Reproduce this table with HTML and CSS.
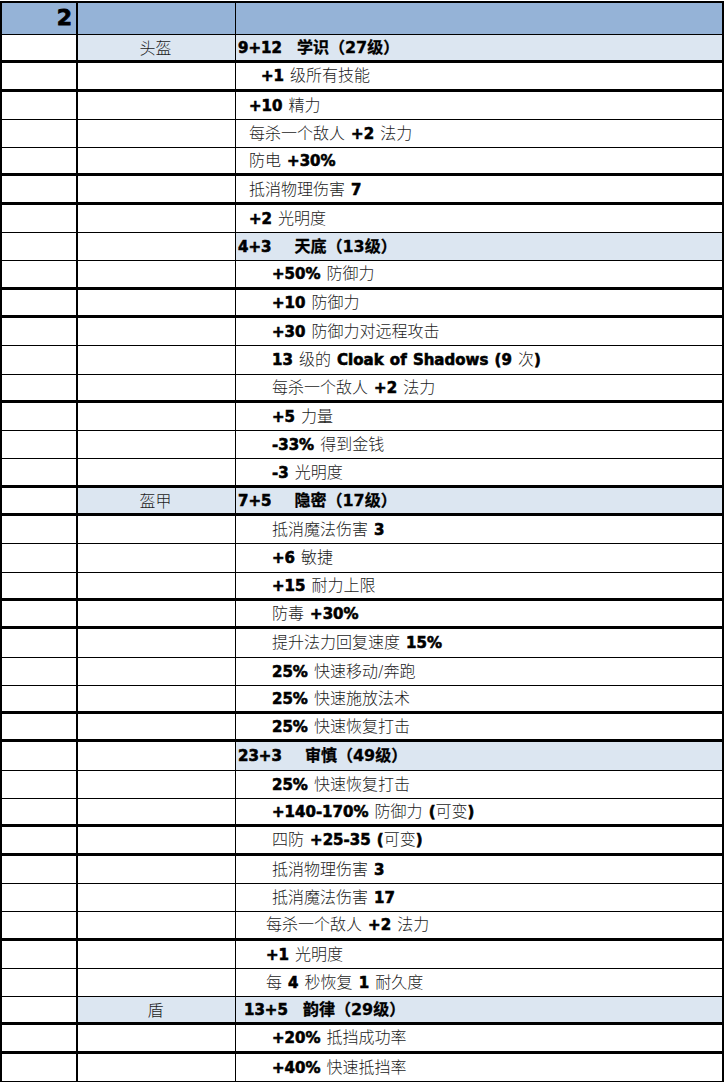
FILE: index.html
```html
<!DOCTYPE html>
<html lang="zh">
<head>
<meta charset="utf-8">
<title>装备属性</title>
<link rel="stylesheet" href="styles.css">
</head>
<body>
<div class="sheet">
  <div class="row head"><div class="c1 num">2</div><div class="c2"></div><div class="c3"></div></div>

  <div class="row sub tk"><div class="c1"></div><div class="c2 lab">头盔</div><div class="c3 pa"><span><b>9+12</b><b class="t gs">学识（27级）</b></span></div></div>
  <div class="row tk"><div class="c1"></div><div class="c2"></div><div class="c3 pc"><span><b>+1</b> 级所有技能</span></div></div>
  <div class="row"><div class="c1"></div><div class="c2"></div><div class="c3 pb"><span><b>+10</b> 精力</span></div></div>
  <div class="row"><div class="c1"></div><div class="c2"></div><div class="c3 pb"><span>每杀一个敌人 <b>+2</b> 法力</span></div></div>
  <div class="row tk"><div class="c1"></div><div class="c2"></div><div class="c3 pb"><span>防电 <b>+30%</b></span></div></div>
  <div class="row tk"><div class="c1"></div><div class="c2"></div><div class="c3 pb"><span>抵消物理伤害 <b>7</b></span></div></div>
  <div class="row"><div class="c1"></div><div class="c2"></div><div class="c3 pb"><span><b>+2</b> 光明度</span></div></div>

  <div class="row sub2"><div class="c1"></div><div class="c2"></div><div class="c3 pa"><span><b>4+3</b><b class="t gl">天底（13级）</b></span></div></div>
  <div class="row tk"><div class="c1"></div><div class="c2"></div><div class="c3 pd"><span><b>+50%</b> 防御力</span></div></div>
  <div class="row tk"><div class="c1"></div><div class="c2"></div><div class="c3 pd"><span><b>+10</b> 防御力</span></div></div>
  <div class="row"><div class="c1"></div><div class="c2"></div><div class="c3 pd"><span><b>+30</b> 防御力对远程攻击</span></div></div>
  <div class="row"><div class="c1"></div><div class="c2"></div><div class="c3 pd"><span><b>13</b> 级的 <b>Cloak of Shadows (9</b> 次<b>)</b></span></div></div>
  <div class="row tk"><div class="c1"></div><div class="c2"></div><div class="c3 pd"><span>每杀一个敌人 <b>+2</b> 法力</span></div></div>
  <div class="row"><div class="c1"></div><div class="c2"></div><div class="c3 pd"><span><b>+5</b> 力量</span></div></div>
  <div class="row"><div class="c1"></div><div class="c2"></div><div class="c3 pd"><span><b>-33%</b> 得到金钱</span></div></div>
  <div class="row tk"><div class="c1"></div><div class="c2"></div><div class="c3 pd"><span><b>-3</b> 光明度</span></div></div>

  <div class="row sub tk"><div class="c1"></div><div class="c2 lab">盔甲</div><div class="c3 pa"><span><b>7+5</b><b class="t gl">隐密（17级）</b></span></div></div>
  <div class="row"><div class="c1"></div><div class="c2"></div><div class="c3 pd"><span>抵消魔法伤害 <b>3</b></span></div></div>
  <div class="row"><div class="c1"></div><div class="c2"></div><div class="c3 pd"><span><b>+6</b> 敏捷</span></div></div>
  <div class="row tk"><div class="c1"></div><div class="c2"></div><div class="c3 pd"><span><b>+15</b> 耐力上限</span></div></div>
  <div class="row tk"><div class="c1"></div><div class="c2"></div><div class="c3 pd"><span>防毒 <b>+30%</b></span></div></div>
  <div class="row"><div class="c1"></div><div class="c2"></div><div class="c3 pd"><span>提升法力回复速度 <b>15%</b></span></div></div>
  <div class="row"><div class="c1"></div><div class="c2"></div><div class="c3 pd"><span><b>25%</b> 快速移动/奔跑</span></div></div>
  <div class="row tk"><div class="c1"></div><div class="c2"></div><div class="c3 pd"><span><b>25%</b> 快速施放法术</span></div></div>
  <div class="row tk"><div class="c1"></div><div class="c2"></div><div class="c3 pd"><span><b>25%</b> 快速恢复打击</span></div></div>

  <div class="row sub2"><div class="c1"></div><div class="c2"></div><div class="c3 pa"><span><b>23+3</b><b class="t gl">审慎（49级）</b></span></div></div>
  <div class="row"><div class="c1"></div><div class="c2"></div><div class="c3 pd"><span><b>25%</b> 快速恢复打击</span></div></div>
  <div class="row tk"><div class="c1"></div><div class="c2"></div><div class="c3 pd"><span><b>+140-170%</b> 防御力 <b>(</b>可变<b>)</b></span></div></div>
  <div class="row tk"><div class="c1"></div><div class="c2"></div><div class="c3 pd"><span>四防 <b>+25-35 (</b>可变<b>)</b></span></div></div>
  <div class="row"><div class="c1"></div><div class="c2"></div><div class="c3 pd"><span>抵消物理伤害 <b>3</b></span></div></div>
  <div class="row"><div class="c1"></div><div class="c2"></div><div class="c3 pd"><span>抵消魔法伤害 <b>17</b></span></div></div>
  <div class="row tk"><div class="c1"></div><div class="c2"></div><div class="c3 pe"><span>每杀一个敌人 <b>+2</b> 法力</span></div></div>
  <div class="row"><div class="c1"></div><div class="c2"></div><div class="c3 pe"><span><b>+1</b> 光明度</span></div></div>
  <div class="row"><div class="c1"></div><div class="c2"></div><div class="c3 pe"><span>每 <b>4</b> 秒恢复 <b>1</b> 耐久度</span></div></div>

  <div class="row sub tk"><div class="c1"></div><div class="c2 lab">盾</div><div class="c3 pf"><span><b>13+5</b><b class="t gs">韵律（29级）</b></span></div></div>
  <div class="row tk"><div class="c1"></div><div class="c2"></div><div class="c3 pd"><span><b>+20%</b> 抵挡成功率</span></div></div>
  <div class="row"><div class="c1"></div><div class="c2"></div><div class="c3 pd"><span><b>+40%</b> 快速抵挡率</span></div></div>
</div>
</body>
</html>
```

FILE: styles.css
```css
html, body {
  margin: 0;
  padding: 0;
  background: #ffffff;
}

body {
  font-family: "DejaVu Sans", "Noto Sans CJK SC", sans-serif;
  color: #111111;
}

.sheet {
  width: 724px;
  box-sizing: border-box;
  margin-top: 1px;
  border-top: 2px solid #000;
  border-left: 2px solid #000;
  border-right: 2px solid #000;
}

.row {
  display: grid;
  grid-template-columns: 76px 158px 1fr;
  height: 28.3px;
  box-sizing: border-box;
  border-bottom: 1px solid #000;
}

.row.tk {
  border-bottom-width: 3px;
}

.row.head {
  height: 32px;
  background: #95b3d7;
}

.c1, .c2, .c3 {
  display: flex;
  align-items: center;
  box-sizing: border-box;
  min-width: 0;
  white-space: nowrap;
  line-height: 1.2;
}

.c1 {
  border-right: 2px solid #000;
}

.c2 {
  border-right: 1px solid #000;
}

.c3 {
  font-family: "DejaVu Sans", "Noto Sans CJK SC", sans-serif;
  font-size: 16px;
  font-weight: 300;
  color: #1c1c1c;
}

.c3 span {
  font-family: "DejaVu Sans", "Noto Sans CJK SC", sans-serif;
  word-spacing: 1px;
}

.sub .c2,
.sub .c3,
.sub2 .c3 {
  background: #dce6f1;
}

.num {
  justify-content: flex-end;
  padding-right: 4px;
  font-family: "DejaVu Sans", sans-serif;
  font-weight: bold;
  font-size: 22px;
  color: #000;
  -webkit-text-stroke: 0.8px #000;
}

.lab {
  justify-content: center;
  font-family: "Noto Sans CJK SC", sans-serif;
  font-size: 16px;
  font-weight: 300;
  color: #1c1c1c;
  padding-right: 2px;
}

.c3 b {
  font-family: "DejaVu Sans", "Noto Sans CJK SC", sans-serif;
  font-weight: bold;
  font-size: 15px;
  color: #000;
  -webkit-text-stroke: 0.6px #000;
}

.c3 b.t {
  font-size: 16px;
  -webkit-text-stroke: 0.3px #000;
}

.gs { margin-left: 15px; }
.gl { margin-left: 23px; }

.pa { padding-left: 2px; }
.pb { padding-left: 13px; }
.pc { padding-left: 25px; }
.pd { padding-left: 36px; }
.pe { padding-left: 30px; }
.pf { padding-left: 8px; }
```
